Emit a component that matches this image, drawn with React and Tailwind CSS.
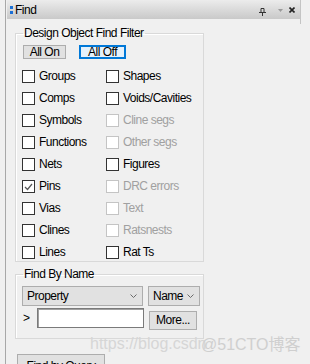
const ROWS = [
  [{ label: "Groups" }, { label: "Shapes" }],
  [{ label: "Comps" }, { label: "Voids/Cavities" }],
  [{ label: "Symbols" }, { label: "Cline segs", disabled: true }],
  [{ label: "Functions" }, { label: "Other segs", disabled: true }],
  [{ label: "Nets" }, { label: "Figures" }],
  [{ label: "Pins", checked: true }, { label: "DRC errors", disabled: true }],
  [{ label: "Vias" }, { label: "Text", disabled: true }],
  [{ label: "Clines" }, { label: "Ratsnests", disabled: true }],
  [{ label: "Lines" }, { label: "Rat Ts" }],
];

function Check({ label, checked, disabled }) {
  return (
    <div className="flex h-[13px] items-center">
      <span
        className={`flex h-[13px] w-[13px] shrink-0 items-center justify-center border bg-white ${
          disabled ? "border-[#c4c4c4]" : "border-[#333333]"
        }`}
      >
        {checked && (
          <svg width="9" height="8" viewBox="0 0 9 8">
            <path d="M1 4 L3.5 6.5 L8 1" fill="none" stroke="#555" strokeWidth="1.2" />
          </svg>
        )}
      </span>
      <span className={`ml-[4px] leading-[13px] ${disabled ? "text-[#a0a0a0]" : "text-black"}`}>{label}</span>
    </div>
  );
}

function Chevron() {
  return (
    <svg width="7" height="4" viewBox="0 0 7 4">
      <path d="M0.5 0.5 L3.5 3.5 L6.5 0.5" fill="none" stroke="#6a6a6a" strokeWidth="1" />
    </svg>
  );
}

export default function App() {
  return (
    <div
      className="relative h-[364px] w-[310px] overflow-hidden bg-[#f0f0f0] text-[12px] tracking-[-0.5px] text-black"
      style={{ fontFamily: "'Liberation Sans', Arial, sans-serif" }}
    >
      <div className="flex h-full">
        <div className="w-[5px]" />
        <div className="h-full w-px bg-[#a8a8a8]" />
        <div className="w-px" />
        <div className="w-[294px]">
          {/* title bar */}
          <div className="flex h-[19px] items-start">
            <div className="flex h-[19px] w-[293px] items-center bg-linear-to-b from-[#ececec] to-[#c9c9c9]">
              <div className="ml-[3px] flex flex-col gap-[2px]">
                <span className="h-[3px] w-[3px] bg-[#1a6fd6]" />
                <span className="h-[3px] w-[3px] bg-[#1a6fd6]" />
              </div>
              <span className="ml-[2px] text-[12px] leading-[14px]">Find</span>
              <div className="ml-auto flex items-center pr-[5px]">
                <svg width="7" height="8" viewBox="0 0 7 8" className="mt-[4px]">
                  <path d="M2 0.5 H5 V4.5 H2 Z" fill="none" stroke="#333" strokeWidth="1" />
                  <path d="M0 4.5 H7" stroke="#333" strokeWidth="1" />
                  <path d="M3.5 4.5 V8" stroke="#333" strokeWidth="1" />
                </svg>
                <svg width="5" height="3" viewBox="0 0 5 3" className="ml-[12px] mt-[1px]">
                  <path d="M0 0 H5 L2.5 3 Z" fill="#9a9a9a" />
                </svg>
                <svg width="6" height="6" viewBox="0 0 6 6" className="ml-[6px] mt-[1px]">
                  <path d="M0.5 0.5 L5.5 5.5 M5.5 0.5 L0.5 5.5" stroke="#222" strokeWidth="1.6" />
                </svg>
              </div>
            </div>
            <div className="h-[24px] w-px bg-[#c4c4c4]" />
          </div>

          <div className="pl-[8px]">
            {/* Design Object Find Filter */}
            <fieldset className="mt-[8px] h-[235px] w-[189px] border border-[#d9d9d9] shadow-[inset_1px_1px_0_#ffffff] pl-[6px]">
              <legend className="ml-[1px] px-[1px] leading-[13px]">Design Object Find Filter</legend>
              <div className="ml-[1px] mt-[5px] flex">
                <button className="h-[14px] w-[43px] border border-[#adadad] bg-[#e1e1e1] leading-[12px]">All On</button>
                <button className="ml-[13px] h-[14px] w-[47px] border-2 border-[#0078d7] bg-[#e5f1fb] leading-[10px]">All Off</button>
              </div>
              <div className="mt-[11px] grid grid-cols-[84px_1fr] gap-y-[9px]">
                {ROWS.map(([a, b]) => (
                  <div key={a.label} className="contents">
                    <Check {...a} />
                    <Check {...b} />
                  </div>
                ))}
              </div>
            </fieldset>

            {/* Find By Name */}
            <fieldset className="mt-[6px] h-[71px] w-[189px] border border-[#d9d9d9] shadow-[inset_1px_1px_0_#ffffff] pl-[6px]">
              <legend className="ml-[1px] px-[1px] leading-[13px]">Find By Name</legend>
              <div className="mt-[5px] flex">
                <div className="flex h-[20px] w-[121px] items-center border border-[#adadad] bg-[#e1e1e1] pl-[4px] pr-[5px]">
                  <span className="leading-[13px]">Property</span>
                  <span className="ml-auto flex">
                    <Chevron />
                  </span>
                </div>
                <div className="ml-[5px] flex h-[20px] w-[52px] items-center border border-[#adadad] bg-[#e1e1e1] pl-[4px] pr-[5px]">
                  <span className="leading-[13px]">Name</span>
                  <span className="ml-auto flex">
                    <Chevron />
                  </span>
                </div>
              </div>
              <div className="mt-[2px] flex items-start">
                <span className="ml-[1px] mt-[4px] w-[14px] leading-[13px]">&gt;</span>
                <div className="h-[20px] w-[107px] border border-[#7a7a7a] bg-white shadow-[inset_1px_1px_0_#a0a0a0]" />
                <button className="ml-[5px] mt-[3px] h-[19px] w-[48px] border border-[#adadad] bg-[#e1e1e1] leading-[13px]">
                  More...
                </button>
              </div>
            </fieldset>

            <button className="ml-[2px] mt-[15px] h-[22px] w-[88px] border border-[#adadad] bg-[#e1e1e1] pt-[3px] leading-[13px]">
              Find by Query
            </button>
          </div>
        </div>
      </div>

      {/* watermark */}
      <span className="absolute left-[90px] top-[335px] text-[16px] leading-[18px] tracking-normal text-[#d6d6d6]">https://blog.csdn</span>
      <span
        className="absolute left-[201px] top-[336px] text-[16px] leading-[18px] tracking-normal text-[#cfcfcf]"
        style={{ fontFamily: "'Liberation Sans', 'Noto Sans CJK SC', sans-serif" }}
      >
        @51CTO博客
      </span>
    </div>
  );
}
